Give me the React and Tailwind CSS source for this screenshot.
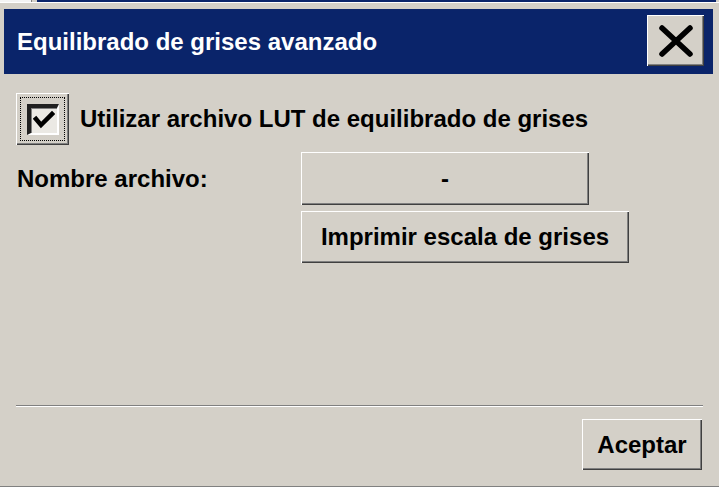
const raised =
  'bg-[#d4d0c8] shadow-[inset_1px_1px_0_#ffffff,inset_-1px_-1px_0_#404040,inset_-2px_-2px_0_#808080]'

function CheckBox() {
  return (
    <div className={`w-[53px] h-[52px] p-[4px] ${raised}`}>
      <div className="w-full h-full border border-dotted border-black flex items-center justify-center">
        <div className="w-[32px] h-[31px] border-t-[4px] border-l-[4px] border-t-[#202020] border-l-[#202020] border-b-2 border-r-2 border-b-[#ffffff] border-r-[#ffffff] bg-[#ebe9e4] shadow-[inset_1px_1px_0_#808080] flex items-center justify-center">
          <svg width="22" height="20" viewBox="0 0 22 20">
            <path d="M3 9 L8 15 L19 4" fill="none" stroke="#000" strokeWidth="4.5" strokeLinecap="square" />
          </svg>
        </div>
      </div>
    </div>
  )
}

export default function App() {
  return (
    <div className="w-[719px] h-[487px] bg-[#d4d0c8] flex flex-col overflow-hidden font-['Liberation_Sans',Arial,sans-serif] font-bold text-black text-[24px]">
      {/* top strip */}
      <div className="h-[9px] flex flex-col">
        <div className="h-[2px] flex">
          <div className="w-[31px] bg-[#f4f4f4]" />
          <div className="w-px bg-[#808080]" />
          <div className="w-[5px]" />
          <div className="w-[679px] bg-[#0a246a]" />
        </div>
        <div className="h-px bg-white" />
      </div>

      {/* title bar */}
      <div className="ml-[4px] w-[709px] h-[65px] bg-[#0a246a] flex items-start justify-between pl-[13px] pr-[9px]">
        <div className="h-full flex items-center text-white">Equilibrado de grises avanzado</div>
        <button className={`mt-[6px] w-[57px] h-[51px] flex items-center justify-center ${raised}`}>
          <svg width="36" height="34" viewBox="0 0 36 34">
            <path d="M4 4 L32 30 M32 4 L4 30" stroke="#000" strokeWidth="5.5" strokeLinecap="round" />
          </svg>
        </button>
      </div>

      {/* body */}
      <div className="px-4 pt-[19px] flex flex-col">
        <div className="flex items-center gap-[11px]">
          <CheckBox />
          <span>Utilizar archivo LUT de equilibrado de grises</span>
        </div>

        <div className="mt-[7px] flex items-center">
          <span className="w-[285px] pl-px">Nombre archivo:</span>
          <div className={`w-[288px] h-[53px] flex items-center justify-center ${raised}`}>-</div>
        </div>

        <div className={`mt-[6px] ml-[285px] w-[328px] h-[52px] flex items-center justify-center ${raised}`}>
          Imprimir escala de grises
        </div>

        <div className="mt-[142px] w-[687px] h-px bg-[#808080]" />
        <div className="w-[687px] h-px bg-white" />

        <div className="mt-[12px] flex justify-end pr-px">
          <div className={`w-[120px] h-[51px] flex items-center justify-center ${raised}`}>Aceptar</div>
        </div>
      </div>

      <div className="mt-auto h-px bg-[#808080]" />
    </div>
  )
}
